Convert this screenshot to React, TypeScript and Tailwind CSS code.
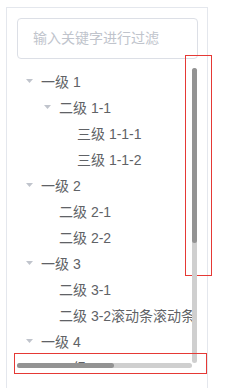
const TREE = [
  { label: '一级 1', level: 0, open: true },
  { label: '二级 1-1', level: 1, open: true },
  { label: '三级 1-1-1', level: 2 },
  { label: '三级 1-1-2', level: 2 },
  { label: '一级 2', level: 0, open: true },
  { label: '二级 2-1', level: 1 },
  { label: '二级 2-2', level: 1 },
  { label: '一级 3', level: 0, open: true },
  { label: '二级 3-1', level: 1 },
  { label: '二级 3-2滚动条滚动条滚动条', level: 1 },
  { label: '一级 4', level: 0, open: true },
  { label: '二级 4-1', level: 1 },
];

const PAD = ['pl-0', 'pl-[18px]', 'pl-[36px]'];

function Caret({ show }: { show?: boolean }) {
  return (
    <span className="w-[24px] h-full flex items-center justify-center shrink-0">
      {show && (
        <svg width="7" height="4" viewBox="0 0 7 4" className="-mt-[2px]">
          <path d="M0 0 L7 0 L3.5 4 Z" fill="#c0c4cc" />
        </svg>
      )}
    </span>
  );
}

export default function App() {
  return (
    <div className="relative w-[227px] h-[388px] overflow-hidden bg-white font-['Liberation_Sans','Noto_Sans_CJK_SC',sans-serif]">
      <div className="ml-[6px] mt-[7px] w-[202px] h-[420px] border border-[#e4e7ed] pt-[10px] px-[10px]">
        <div className="w-[181px] h-[41px] rounded-[4px] border border-[#dcdfe6] flex items-center pl-[15px] text-[14px] text-[#c0c4cc]">
          输入关键字进行过滤
        </div>

        <div className="mt-[10px] w-[175px] h-[294px] overflow-hidden">
          {TREE.map((n, i) => (
            <div key={i} className={`h-[26px] flex items-center whitespace-nowrap text-[14px] text-[#606266] ${PAD[n.level]}`}>
              <Caret show={n.open} />
              <span>{n.label}</span>
            </div>
          ))}
        </div>
      </div>

      {/* vertical scrollbar */}
      <div className="absolute left-[185px] top-[55px] w-[27px] h-[221px] border border-[#e53935]" />
      <div className="absolute left-[192px] top-[68px] w-[5px] h-[295px] rounded-full bg-[#cfcfcf]">
        <div className="h-[175px] rounded-full bg-[#939393]" />
      </div>

      {/* horizontal scrollbar */}
      <div className="absolute left-[14px] top-[353px] w-[193px] h-[21px] border border-[#e53935]" />
      <div className="absolute left-[17px] top-[363px] w-[175px] h-[5px] rounded-full bg-[#cfcfcf]">
        <div className="w-[97px] h-full rounded-full bg-[#939393]" />
      </div>
    </div>
  );
}
